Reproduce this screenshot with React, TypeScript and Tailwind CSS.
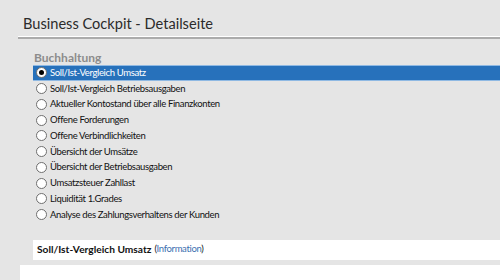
import React from "react";

const items = [
  "Soll/Ist-Vergleich Umsatz",
  "Soll/Ist-Vergleich Betriebsausgaben",
  "Aktueller Kontostand über alle Finanzkonten",
  "Offene Forderungen",
  "Offene Verbindlichkeiten",
  "Übersicht der Umsätze",
  "Übersicht der Betriebsausgaben",
  "Umsatzsteuer Zahllast",
  "Liquidität 1.Grades",
  "Analyse des Zahlungsverhaltens der Kunden",
];

const Radio = ({ checked }: { checked: boolean }) => (
  <span className="w-[11px] h-[11px] rounded-full bg-white border border-[#6f6f6f] flex items-center justify-center shrink-0">
    {checked && <span className="w-[5px] h-[5px] rounded-full bg-black" />}
  </span>
);

const App = () => {
  return (
    <div className="w-[500px] h-[280px] bg-[#e5e5e5] overflow-hidden font-['Lato',sans-serif]">
      <div className="pl-[18px] pt-[13px]">
        <h1 className="pl-[5px] text-[14.6px] leading-[22px] text-[#2b2b2b]">
          Business Cockpit - Detailseite
        </h1>
        <div className="mt-[1px] h-[3px] bg-[#ababab] border-t border-white" />
      </div>

      <div className="pl-[33px] mt-[11px]">
        <p className="pl-[1px] text-[12px] leading-[15px] font-bold text-[#8c8c8c]">
          Buchhaltung
        </p>
        <div>
          {items.map((label, i) => (
            <div
              key={label}
              className={
                i === 0
                  ? "h-[15.75px] flex items-center gap-[3px] pl-[3px] bg-[#2771bb] border-y border-[#8fb9e3] text-white"
                  : "h-[15.75px] flex items-center gap-[3px] pl-[3px] text-[#111]"
              }
            >
              <Radio checked={i === 0} />
              <span className="text-[9.5px] leading-[12px] tracking-[-0.35px]">{label}</span>
            </div>
          ))}
        </div>
      </div>

      <div className="ml-[33px] mt-[17px] h-[20px] bg-white flex items-center pl-[4px] text-[#111]">
        <span className="font-bold text-[10.2px]">Soll/Ist-Vergleich Umsatz</span>
        <span className="ml-[3px] text-[9.5px] tracking-[-0.35px]">
          (<span className="text-[#3b6fb0]">Information</span>)
        </span>
      </div>
      <div className="ml-[20px] mt-[5px] h-[30px] bg-white" />
    </div>
  );
};

export default App;
